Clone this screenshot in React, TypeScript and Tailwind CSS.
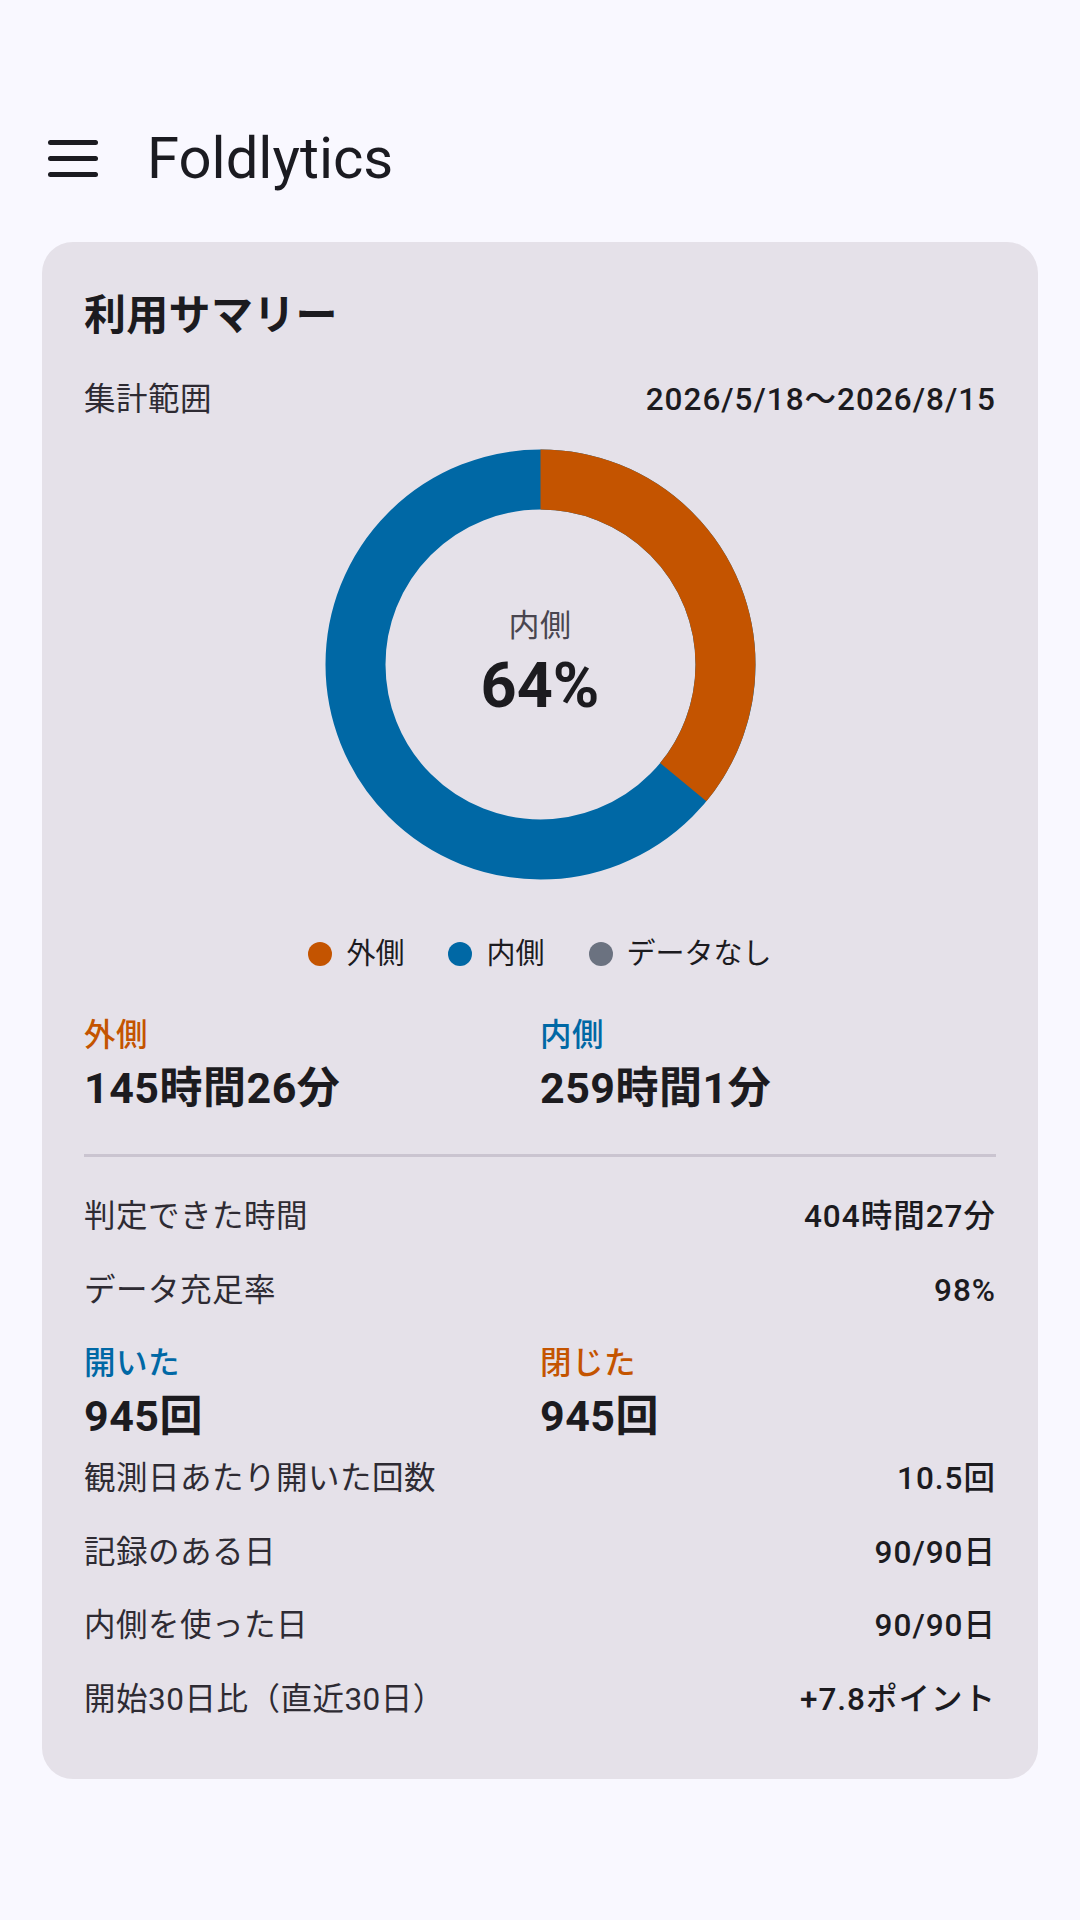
import React from "react";

const ORANGE = "#c45400";
const BLUE = "#0068a5";

function Donut() {
  const r = 185;
  const c = 2 * Math.PI * r;
  const outer = 8726 / (8726 + 15541);
  const orangeLen = outer * c;
  return (
    <div className="relative h-[431px] w-[431px]">
      <svg className="absolute inset-0" width="431" height="431" viewBox="0 0 431 431">
        <circle cx="215.5" cy="215.5" r={r} fill="none" stroke={BLUE} strokeWidth="60" />
        <circle
          cx="215.5"
          cy="215.5"
          r={r}
          fill="none"
          stroke={ORANGE}
          strokeWidth="60"
          strokeDasharray={`${orangeLen} ${c}`}
          transform="rotate(-90 215.5 215.5)"
        />
      </svg>
      <div className="absolute inset-0 flex flex-col items-center justify-center">
        <div className="text-[31px] leading-[42px] tracking-[0.5px] text-[#49454f]">内側</div>
        <div className="text-[63px] font-bold leading-[78px] text-[#1c1b1f]">64%</div>
      </div>
    </div>
  );
}

function Row({ label, value }: { label: string; value: string }) {
  return (
    <div className="flex items-center justify-between text-[31.5px] leading-[42px]">
      <span className="tracking-[0.5px] text-[#2e2b33]">{label}</span>
      <span className="font-medium tracking-[1px] text-[#1c1b1f]">{value}</span>
    </div>
  );
}

function StatPair({
  a,
  b,
}: {
  a: { label: string; value: string; color: string };
  b: { label: string; value: string; color: string };
}) {
  return (
    <div className="grid grid-cols-2">
      {[a, b].map((s) => (
        <div key={s.label} className="flex flex-col">
          <span className={`text-[31.5px] font-medium leading-[42px] tracking-[0.5px] ${s.color}`}>{s.label}</span>
          <span className="text-[43px] font-bold leading-[63px] tracking-[0.5px] text-[#1c1b1f]">{s.value}</span>
        </div>
      ))}
    </div>
  );
}

export default function App() {
  return (
    <div className="min-h-[1920px] w-[1080px] bg-[#f9f8ff] pt-[74px] font-['Roboto','Noto_Sans_CJK_JP',sans-serif] text-[#1c1b1f]">
      <header className="flex h-[168px] items-center pl-[42px]">
        <svg width="63" height="63" viewBox="0 0 63 63" className="shrink-0">
          <g stroke="#1b1b21" strokeWidth="5" strokeLinecap="round">
            <line x1="8.5" y1="15.5" x2="53.5" y2="15.5" />
            <line x1="8.5" y1="31.5" x2="53.5" y2="31.5" />
            <line x1="8.5" y1="47.5" x2="53.5" y2="47.5" />
          </g>
        </svg>
        <h1 className="ml-[42px] text-[58px] font-normal leading-[74px] text-[#1b1b21]">Foldlytics</h1>
      </header>

      <section className="mx-[42px] rounded-[31px] bg-[#e5e1e9] px-[42px] pb-[58px] pt-[42px]">
        <h2 className="text-[42px] font-bold leading-[63px] tracking-[0.3px] text-[#1c1b1f]">利用サマリー</h2>

        <div className="mt-[31.5px] flex items-center justify-between text-[31.5px] leading-[42px]">
          <span className="tracking-[0.5px] text-[#2e2b33]">集計範囲</span>
          <span className="font-medium tracking-[1px] text-[#1c1b1f]">2026/5/18〜2026/8/15</span>
        </div>

        <div className="mt-[28.5px] flex justify-center">
          <Donut />
        </div>

        <div className="mt-[53px] flex justify-center gap-[44px] text-[29px] leading-[42px] text-[#1c1b1f]">
          <div className="flex items-center gap-[14px]">
            <span className="h-[24px] w-[24px] rounded-full bg-[#c45400]" />
            <span>外側</span>
          </div>
          <div className="flex items-center gap-[14px]">
            <span className="h-[24px] w-[24px] rounded-full bg-[#0068a5]" />
            <span>内側</span>
          </div>
          <div className="flex items-center gap-[14px]">
            <span className="h-[24px] w-[24px] rounded-full bg-[#6b7280]" />
            <span>データなし</span>
          </div>
        </div>

        <div className="mt-[40px]">
          <StatPair
            a={{ label: "外側", value: "145時間26分", color: "text-[#c45400]" }}
            b={{ label: "内側", value: "259時間1分", color: "text-[#0068a5]" }}
          />
        </div>

        <div className="mt-[34px] h-[3px] bg-[#cac4d0]" />

        <div className="mt-[39px] flex flex-col gap-[31.5px]">
          <Row label="判定できた時間" value="404時間27分" />
          <Row label="データ充足率" value="98%" />
        </div>

        <div className="mt-[31.5px]">
          <StatPair
            a={{ label: "開いた", value: "945回", color: "text-[#0068a5]" }}
            b={{ label: "閉じた", value: "945回", color: "text-[#c45400]" }}
          />
        </div>

        <div className="mt-[10px] flex flex-col gap-[31.5px]">
          <Row label="観測日あたり開いた回数" value="10.5回" />
          <Row label="記録のある日" value="90/90日" />
          <Row label="内側を使った日" value="90/90日" />
          <Row label="開始30日比（直近30日）" value="+7.8ポイント" />
        </div>
      </section>
    </div>
  );
}
